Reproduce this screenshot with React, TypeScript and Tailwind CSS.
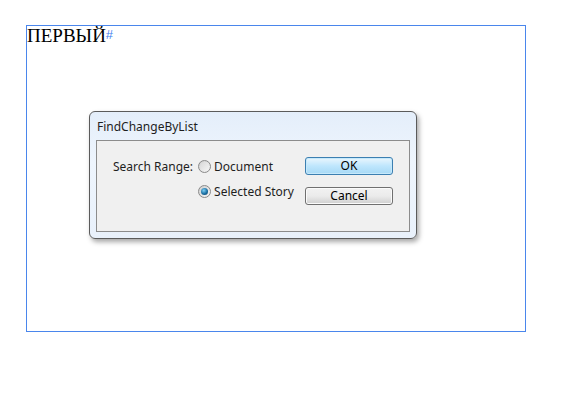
import React from "react";

const ui = { fontFamily: '"Noto Sans", "Open Sans", sans-serif' };

const Radio = ({ checked }: { checked?: boolean }) => (
  <span className="flex h-[13px] w-[13px] items-center justify-center rounded-full border border-[#8a8a8a] bg-[linear-gradient(135deg,#cfcfcf,#f6f6f6)]">
    {checked ? (
      <span className="h-[7px] w-[7px] rounded-full bg-[radial-gradient(circle_at_40%_35%,#7fd0f5,#1a6fa3_55%,#0b3f63)]" />
    ) : (
      <span className="h-[9px] w-[9px] rounded-full bg-[linear-gradient(135deg,#d8d8d8,#f4f4f4)]" />
    )}
  </span>
);

const Button = ({ label, primary }: { label: string; primary?: boolean }) => (
  <div
    className={
      "flex h-[18px] w-[88px] items-center justify-center rounded-[3px] border text-[12px] leading-none text-black " +
      (primary
        ? "border-[#3c7fb1] bg-[linear-gradient(#eaf6fd,#bee6fd_50%,#a7d9f5)] shadow-[inset_0_0_0_1px_#c6e9fb]"
        : "border-[#707070] bg-[linear-gradient(#f2f2f2,#ebebeb_50%,#cfcfcf)] shadow-[inset_0_0_0_1px_#fbfbfb]")
    }
  >
    {label}
  </div>
);

export default function App() {
  return (
    <div className="h-[393px] w-[574px] bg-white pl-[26px] pt-[25px]">
      <div className="flex h-[307px] w-[500px] flex-col border border-[#4a86ec]">
        <div className="h-[22px] whitespace-nowrap text-[19px] leading-[19px] text-black" style={{ fontFamily: '"Liberation Serif", serif' }}>
          ПЕРВЫЙ
          <span className="relative -top-[3px] text-[13px] text-[#3f7fef]" style={{ fontFamily: '"Liberation Sans", sans-serif' }}>
            #
          </span>
        </div>

        <div
          className="ml-[62px] mt-[63px] flex h-[128px] w-[328px] flex-col rounded-[6px] border border-[#5b5b5b] bg-[linear-gradient(#e4eefa,#eef5fd_40%,#e9f1fb)] shadow-[2px_3px_5px_rgba(0,0,0,0.35)]"
          style={ui}
        >
          <div className="flex h-[28px] items-center pl-[7px] pt-[2px] text-[12px] text-[#1e1e1e]">FindChangeByList</div>
          <div className="mx-[6px] mb-[6px] flex flex-1 border border-[#8c8c8c] bg-[#f0f0f0] pl-[16px] pr-[16px] pt-[16px] text-[12px] text-[#1e1e1e]">
            <div className="flex pt-[3px]">
              <span className="mr-[5px] leading-[13px]">Search Range:</span>
              <div className="flex flex-col gap-[12px]">
                <div className="flex items-center gap-[3px]">
                  <Radio />
                  <span className="leading-[13px]">Document</span>
                </div>
                <div className="flex items-center gap-[3px]">
                  <Radio checked />
                  <span className="leading-[13px]">Selected Story</span>
                </div>
              </div>
            </div>
            <div className="ml-auto flex flex-col gap-[12px]">
              <Button label="OK" primary />
              <Button label="Cancel" />
            </div>
          </div>
        </div>
      </div>
    </div>
  );
}
